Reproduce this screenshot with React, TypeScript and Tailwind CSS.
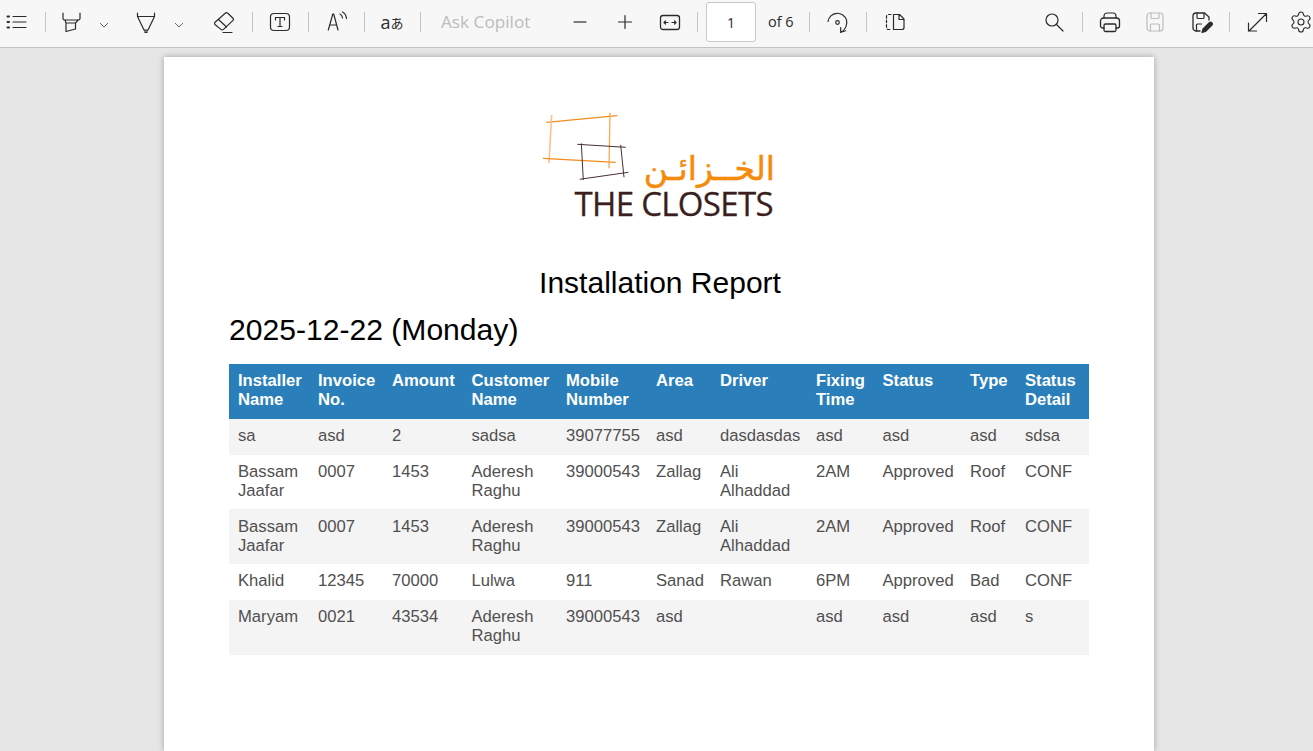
import { ReactNode } from "react";
import { Settings } from "lucide-react";

const Sep = ({ className }: { className: string }) => (
  <div className={`w-px h-[20px] bg-[#c4c4c4] shrink-0 ${className}`} />
);

const Slot = ({ className, children }: { className: string; children: ReactNode }) => (
  <div className={`h-[30px] flex items-center justify-center shrink-0 text-[#2b2b2b] ${className}`}>
    {children}
  </div>
);

const Icon = ({ children, className = "" }: { children: ReactNode; className?: string }) => (
  <svg
    width="24"
    height="24"
    viewBox="0 0 24 24"
    fill="none"
    stroke="currentColor"
    strokeWidth="1.2"
    strokeLinecap="round"
    strokeLinejoin="round"
    className={className}
  >
    {children}
  </svg>
);

const Chevron = () => (
  <svg width="10" height="6" viewBox="0 0 10 6" fill="none" stroke="#666" strokeWidth="1" className="mt-[5px]">
    <path d="M1 1l4 4 4-4" />
  </svg>
);

const Logo = () => (
  <svg width="232" height="108" viewBox="544 112 232 108" className="block mx-auto overflow-visible" fill="none">
    <g stroke="#f28c1e" strokeWidth="1.3">
      <path d="M547.3 122.3L618.3 115.7" />
      <path d="M552.7 115L550 163.3" stroke="#f9c489" strokeWidth="1.6" />
      <path d="M544 158.3L616.7 162.3" />
      <path d="M611 112.7L610 168.3" stroke="#f7a94f" />
    </g>
    <g stroke="#4a2f33" strokeWidth="1">
      <path d="M578.3 144.3L626.7 147.3" />
      <path d="M582.3 143.3L584.3 180" />
      <path d="M580.7 179.3L629.3 172.3" />
      <path d="M621.7 145L625 177.3" />
    </g>
    <text
      x="776"
      y="180"
      direction="rtl"
      fill="#f58a0b"
      stroke="#f58a0b"
      strokeWidth="0.5"
      fontSize="33"
      fontFamily="'DejaVu Sans', sans-serif"
    >
      الخــزائـن
    </text>
    <text
      x="575.5"
      y="216"
      fill="#3b1f20"
      stroke="#3b1f20"
      strokeWidth="0.3"
      fontSize="33"
      textLength="199"
      fontFamily="'Open Sans', sans-serif"
    >
      THE CLOSETS
    </text>
  </svg>
);

const Toolbar = () => (
  <div className="h-[48px] pb-[3px] bg-[#f7f7f7] border-b border-[#c3c3c3] flex items-center overflow-hidden shrink-0 font-['Open_Sans',sans-serif]">
    <Slot className="w-[34px]">
      <Icon>
        <path d="M8 6.5h13M8 12h13M8 17.5h13" />
        <path d="M2.5 6.5h1.5M2.5 12h1.5M2.5 17.5h1.5" strokeWidth="2" />
      </Icon>
    </Slot>
    <Sep className="ml-[11px]" />
    <Slot className="ml-[10px] w-[30px]">
      <Icon>
        <path d="M4 3v5.5A1.5 1.5 0 0 0 5.5 10h14A1.5 1.5 0 0 0 21 8.5V3" />
        <path d="M6 10l1 3v8.5l9.5-2.5v-6l2.5-3M7 13h9.5" />
      </Icon>
    </Slot>
    <Slot className="ml-[11px] w-[14px]">
      <Chevron />
    </Slot>
    <Slot className="ml-[20px] w-[30px]">
      <Icon>
        <path d="M3.5 3v3.5h17V3" />
        <path d="M3.5 6.5L10 20h4l6.5-13.5M11 20v2.5h2V20" />
      </Icon>
    </Slot>
    <Slot className="ml-[11px] w-[14px]">
      <Chevron />
    </Slot>
    <Slot className="ml-[22px] w-[30px]">
      <Icon>
        <path d="M14.5 3a1.5 1.5 0 0 1 2 0L22 8.2a1.5 1.5 0 0 1 0 2.2L12.5 19.4a2 2 0 0 1-2.6 0L4 14.5a1.5 1.5 0 0 1 0-2.2z" />
        <path d="M7.5 9.5l8 7.5M12 22.5h9" />
      </Icon>
    </Slot>
    <Sep className="ml-[14px]" />
    <Slot className="ml-[12px] w-[30px]">
      <Icon>
        <rect x="2.5" y="3.5" width="19" height="17" rx="3.5" />
        <path d="M7.5 10V7.5h9V10M12 7.5v9M10 16.5h4" />
      </Icon>
    </Slot>
    <Sep className="ml-[13px]" />
    <Slot className="ml-[13px] w-[30px]">
      <Icon>
        <path d="M3.3 20L7.8 4h.9L13 20M4.8 15h6.9" />
        <path d="M15 4c1.5.7 2.3 2 2.5 4M17.5 2c2.5 1.3 3.7 3.5 4 6.5" />
      </Icon>
    </Slot>
    <Sep className="ml-[12px]" />
    <Slot className="ml-[12px] w-[30px] font-['Open_Sans','Noto_Sans_CJK_JP',sans-serif] leading-none">
      <span className="text-[18px]">a</span>
      <span className="text-[13px] mt-[2px]">あ</span>
    </Slot>
    <Sep className="ml-[13px]" />
    <div className="ml-[20px] w-[88px] shrink-0 text-[17.2px] text-[#bcbcbc] whitespace-nowrap">Ask Copilot</div>
    <Slot className="ml-[36px] w-[30px]">
      <Icon>
        <path d="M6 12h12" strokeWidth="1.4" stroke="#555" />
      </Icon>
    </Slot>
    <Slot className="ml-[15px] w-[30px]">
      <Icon>
        <path d="M5.5 12h13M12 5.5v13" />
      </Icon>
    </Slot>
    <Slot className="ml-[15px] w-[30px]">
      <Icon>
        <rect x="2.5" y="5.5" width="19" height="14" rx="2.5" strokeWidth="1.3" />
        <path d="M6 12.5h4M6 12.5L7.5 11M6 12.5L7.5 14M18 12.5h-4M18 12.5L16.5 11M18 12.5L16.5 14" />
      </Icon>
    </Slot>
    <Sep className="ml-[12px]" />
    <div className="ml-[8px] w-[50px] h-[40px] shrink-0 bg-white border border-[#c8c8c8] rounded-[3px] flex items-center justify-center text-[14px] text-[#2b2b2b]">
      1
    </div>
    <div className="ml-[12px] w-[27px] shrink-0 text-[14.5px] text-[#2b2b2b] whitespace-nowrap">of 6</div>
    <Sep className="ml-[14px]" />
    <Slot className="ml-[13px] w-[30px]">
      <Icon>
        <path d="M2 11.5A9.5 9.5 0 0 1 20.5 10C21.5 14 20 19.5 15 22.3" />
        <path d="M14.7 17.5v4.8l5-1.5" />
        <circle cx="11.5" cy="12.5" r="1.8" />
      </Icon>
    </Slot>
    <Sep className="ml-[13px]" />
    <Slot className="ml-[12px] w-[30px]">
      <Icon>
        <path d="M9 4.5H6.5a2 2 0 0 0-2 2v11a2 2 0 0 0 2 2H9" strokeDasharray="2.5 2" />
        <path d="M11.5 4.5h6L22 9v8.5a2 2 0 0 1-2 2h-8.5zM17 4.5v5h5" />
      </Icon>
    </Slot>
    <Slot className="ml-[130px] w-[30px]">
      <Icon>
        <circle cx="10" cy="10" r="6" />
        <path d="M14.5 14.5L21 21" />
      </Icon>
    </Slot>
    <Sep className="ml-[13px]" />
    <Slot className="ml-[12px] w-[30px]">
      <Icon>
        <path d="M6 8V6a3 3 0 0 1 3-3h6a3 3 0 0 1 3 3v2" />
        <path d="M6 18H4.5a2 2 0 0 1-2-2v-5a3 3 0 0 1 3-3h13a3 3 0 0 1 3 3v5a2 2 0 0 1-2 2H18" strokeWidth="1.3" />
        <rect x="6" y="14" width="12" height="7.5" rx="1.5" strokeWidth="1.3" />
      </Icon>
    </Slot>
    <Slot className="ml-[15px] w-[30px]">
      <Icon className="text-[#bdbdbd]">
        <rect x="4" y="3" width="16" height="18" rx="3" />
        <path d="M8 3v4.5a1 1 0 0 0 1 1h6a1 1 0 0 0 1-1V3M7.5 21v-6a1 1 0 0 1 1-1h7a1 1 0 0 1 1 1v6" />
      </Icon>
    </Slot>
    <Slot className="ml-[16px] w-[30px]">
      <Icon>
        <path d="M11 21H7a3 3 0 0 1-3-3V6a3 3 0 0 1 3-3h8.5L20 7v3" strokeWidth="1.3" />
        <path d="M8 3v4.5a1 1 0 0 0 1 1h5a1 1 0 0 0 1-1V3M7.5 21v-6a1 1 0 0 1 1-1h4" />
        <path d="M13 22.5l1-3.5 6.5-6.5a1.8 1.8 0 0 1 2.5 2.5L16.5 21.5z" fill="currentColor" />
      </Icon>
    </Slot>
    <Sep className="ml-[13px]" />
    <Slot className="ml-[12px] w-[30px]">
      <Icon>
        <path d="M4 21L21 4M13.5 3.5h8v8M3.5 13v8h8" />
      </Icon>
    </Slot>
    <Slot className="ml-[14px] w-[30px]">
      <Settings size={24} strokeWidth={1.1} />
    </Slot>
  </div>
);

const rows = [
  ["sa", "asd", "2", "sadsa", "39077755", "asd", "dasdasdas", "asd", "asd", "asd", "sdsa"],
  ["Bassam Jaafar", "0007", "1453", "Aderesh Raghu", "39000543", "Zallag", "Ali Alhaddad", "2AM", "Approved", "Roof", "CONF"],
  ["Bassam Jaafar", "0007", "1453", "Aderesh Raghu", "39000543", "Zallag", "Ali Alhaddad", "2AM", "Approved", "Roof", "CONF"],
  ["Khalid", "12345", "70000", "Lulwa", "911", "Sanad", "Rawan", "6PM", "Approved", "Bad", "CONF"],
  ["Maryam", "0021", "43534", "Aderesh Raghu", "39000543", "asd", "", "asd", "asd", "asd", "s"],
];

const headers = [
  "Installer Name",
  "Invoice No.",
  "Amount",
  "Customer Name",
  "Mobile Number",
  "Area",
  "Driver",
  "Fixing Time",
  "Status",
  "Type",
  "Status Detail",
];

const Report = () => (
  <table className="w-[860px] table-fixed border-collapse text-[16.64px] leading-[18.75px] mt-[16px]">
    <colgroup>
      <col className="w-[80px]" />
      <col className="w-[74px]" />
      <col className="w-[79.5px]" />
      <col className="w-[94.5px]" />
      <col className="w-[90px]" />
      <col className="w-[64px]" />
      <col className="w-[96px]" />
      <col className="w-[66.5px]" />
      <col className="w-[87.5px]" />
      <col className="w-[55px]" />
      <col className="w-[73px]" />
    </colgroup>
    <thead>
      <tr className="bg-[#2a7fba] text-white">
        {headers.map((h) => (
          <th key={h} className="pl-[9px] pr-0 pt-[8.3px] pb-[8.95px] text-left align-top font-bold">
            {h}
          </th>
        ))}
      </tr>
    </thead>
    <tbody className="text-[#505050]">
      {rows.map((row, i) => (
        <tr key={i} className="odd:bg-[#f4f4f4]">
          {row.map((cell, j) => (
            <td key={j} className="pl-[9px] pr-0 pt-[8.3px] pb-[8.95px] align-top">
              {cell}
            </td>
          ))}
        </tr>
      ))}
    </tbody>
  </table>
);

export default function App() {
  return (
    <div className="w-[1313px] h-[751px] overflow-hidden flex flex-col bg-[#e6e6e6] font-['Liberation_Sans',Arial,sans-serif]">
      <Toolbar />
      <div className="w-[990px] ml-[164px] mt-[9px] grow bg-white shadow-[0_0_6px_rgba(0,0,0,0.3)] pt-[55px] px-[65px]">
        <Logo />
        <h1 className="mt-[46px] pl-[2px] text-center text-[30px] leading-[34px] text-black">Installation Report</h1>
        <h2 className="mt-[12px] text-[30.1px] leading-[36px] text-black">2025-12-22 (Monday)</h2>
        <Report />
      </div>
    </div>
  );
}
